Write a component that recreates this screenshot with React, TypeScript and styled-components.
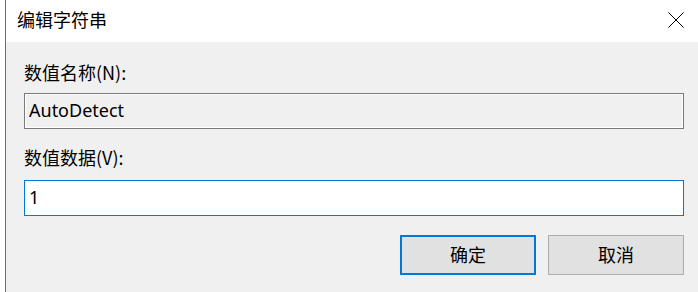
import styled, { createGlobalStyle } from 'styled-components';

const GlobalStyle = createGlobalStyle`
  html, body {
    margin: 0;
    padding: 0;
    background: #ffffff;
  }
  body {
    font-family: "Noto Sans CJK SC", "Noto Sans", sans-serif;
    color: #000000;
  }
`;

const App = () => {
  return (
    <>
      <GlobalStyle />
      <Screen>
        <Window>
          <TitleBar>
            <Title>编辑字符串</Title>
            <CloseButton aria-label="关闭">
              <svg width="16" height="16" viewBox="0 0 16 16">
                <path d="M0.5 0.5 L15.5 15.5 M15.5 0.5 L0.5 15.5" stroke="#000" strokeWidth="1" fill="none" />
              </svg>
            </CloseButton>
          </TitleBar>
          <Body>
            <Label>数值名称(N):</Label>
            <Field readOnly value="AutoDetect" $readOnly />
            <Label $second>数值数据(V):</Label>
            <Field defaultValue="1" />
            <ButtonRow>
              <Button $primary>确定</Button>
              <Button>取消</Button>
            </ButtonRow>
          </Body>
        </Window>
      </Screen>
    </>
  );
};

export default App;

const Screen = styled.div`
  display: flex;
  width: 698px;
  height: 292px;
  padding-left: 5px;
  box-sizing: border-box;
  background: #ffffff;
`;

const Window = styled.div`
  flex: 1;
  display: flex;
  flex-direction: column;
  border-left: 1px solid #1883d7;
  background: #f0f0f0;
`;

const TitleBar = styled.div`
  display: flex;
  align-items: center;
  justify-content: space-between;
  height: 42px;
  padding: 0 14px 0 11px;
  background: #ffffff;
  flex-shrink: 0;
`;

const Title = styled.div`
  font-size: 18px;
  line-height: 24px;
  margin-top: -4px;
`;

const CloseButton = styled.div`
  display: flex;
  width: 16px;
  height: 16px;
  margin-top: -3px;
`;

const Body = styled.div`
  display: flex;
  flex-direction: column;
  padding: 18px 14px 0 18px;
`;

const Label = styled.div<{ $second?: boolean }>`
  font-size: 18px;
  line-height: 24px;
  margin-top: ${(p) => (p.$second ? '16px' : '0')};
  margin-bottom: ${(p) => (p.$second ? '11px' : '9px')};
`;

const Field = styled.input<{ $readOnly?: boolean }>`
  height: 36px;
  box-sizing: border-box;
  margin: 0;
  padding: 0 4px 2px 4px;
  font-family: "Noto Sans", "Noto Sans CJK SC", sans-serif;
  font-size: 18px;
  color: #000000;
  outline: none;
  border: 1px solid ${(p) => (p.$readOnly ? '#7a7a7a' : '#0078d7')};
  background: ${(p) => (p.$readOnly ? '#f0f0f0' : '#ffffff')};
  box-shadow: ${(p) => (p.$readOnly ? 'inset 0 0 0 1px #ffffff' : 'none')};
`;

const ButtonRow = styled.div`
  display: flex;
  justify-content: flex-end;
  gap: 12px;
  margin-top: 19px;
`;

const Button = styled.button<{ $primary?: boolean }>`
  width: 136px;
  height: 40px;
  box-sizing: border-box;
  margin: 0;
  padding: 0 0 2px 0;
  font-family: "Noto Sans CJK SC", sans-serif;
  font-size: 18px;
  color: #000000;
  background: #e1e1e1;
  border: ${(p) => (p.$primary ? '2px solid #0078d7' : '1px solid #adadad')};
  cursor: pointer;
`;
